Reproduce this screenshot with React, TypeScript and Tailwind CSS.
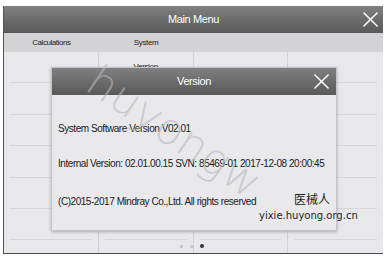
import React from "react";

const narrow = { fontFamily: '"Liberation Sans", Arial, sans-serif' };

function XIcon({ size }: { size: number }) {
  return (
    <svg width={size} height={size} viewBox="0 0 16 16" fill="none">
      <path d="M1 1 L15 15 M15 1 L1 15" stroke="#ffffff" strokeWidth="1.6" strokeLinecap="round" />
    </svg>
  );
}

export default function App() {
  const cols = [0, 1, 2, 3];
  const rows = [0, 1, 2, 3, 4, 5];
  return (
    <div className="relative w-[390px] h-[259px] bg-white overflow-hidden" style={narrow}>
      <div className="ml-[3px] mt-[6px] w-[380px] h-[248px] flex flex-col border-l border-[#555] border-b-[1.5px] border-b-[#4a4a4a] bg-[#e8e8ec]">
        <div className="relative h-[27px] shrink-0 flex items-center justify-center bg-gradient-to-b from-[#808080] to-[#595959]">
          <span className="text-[11px] tracking-[-0.4px] text-white">Main Menu</span>
          <div className="absolute left-[359px] top-[6px]">
            <XIcon size={15} />
          </div>
        </div>
        <div className="h-[19px] shrink-0 grid grid-cols-4 bg-[#d3d3d5] items-center">
          <div className="text-center text-[8px] tracking-[-0.45px] text-[#222]">Calculations</div>
          <div className="text-center text-[8px] tracking-[-0.35px] text-[#222]">System</div>
          <div />
          <div />
        </div>
        <div className="flex-1 grid grid-cols-4">
          {cols.map((c) => (
            <div key={c} className={c < 3 ? "border-r border-[#d2d2d6]" : ""}>
              {rows.map((r) => (
                <div key={r} className="h-[31.4px] px-[6px]">
                  <div className="h-full border-b border-[#d6d6da] flex items-center justify-center">
                    {c === 1 && r === 0 ? <span className="text-[8px] tracking-[-0.35px] text-[#222]">Version</span> : null}
                  </div>
                </div>
              ))}
            </div>
          ))}
        </div>
      </div>

      <div className="absolute left-[180px] top-[244px] flex items-center gap-[7px]">
        <span className="w-[3px] h-[3px] rounded-full border border-[#aaa]" />
        <span className="w-[3px] h-[3px] rounded-full border border-[#aaa]" />
        <span className="w-[4px] h-[4px] rounded-full bg-[#333]" />
      </div>

      <div className="absolute left-[51px] top-[67px] w-[286px] h-[164px] flex flex-col bg-[#e9e9ec] border border-[#c4c4c8] shadow-[0_1px_3px_rgba(0,0,0,0.25)]">
        <div className="relative h-[27px] shrink-0 flex items-center justify-center bg-gradient-to-b from-[#808080] to-[#595959]">
          <span className="text-[11px] tracking-[-0.4px] text-white">Version</span>
          <div className="absolute left-[262px] top-[6px]">
            <XIcon size={15} />
          </div>
        </div>
        <div className="flex flex-col pl-[6px] pt-[26px] text-[10px] tracking-[-0.45px] text-[#1a1a1a] leading-none whitespace-nowrap">
          <div className="h-[16px] flex items-center">System Software Version V02.01</div>
          <div className="h-[16px] mt-[19px] flex items-center">Internal Version: 02.01.00.15 SVN: 85469-01 2017-12-08 20:00:45</div>
          <div className="h-[16px] mt-[22px] flex items-center">(C)2015-2017 Mindray Co.,Ltd. All rights reserved</div>
        </div>
      </div>

      <div
        className="absolute left-[104px] top-[58px] text-[44px] text-[#b8b8bc] font-extralight opacity-60 origin-top-left rotate-[34deg] leading-none"
        style={{ fontFamily: '"DejaVu Sans", sans-serif' }}
      >
        huyongw
      </div>

      <div
        className="absolute left-[294px] top-[193px] text-[12px] text-[#222] leading-none"
        style={{ fontFamily: '"Noto Sans CJK SC", sans-serif' }}
      >
        医械人
      </div>
      <div
        className="absolute left-[259px] top-[211px] text-[10px] text-[#222] leading-none"
        style={{ fontFamily: '"DejaVu Sans", sans-serif' }}
      >
        yixie.huyong.org.cn
      </div>
    </div>
  );
}
